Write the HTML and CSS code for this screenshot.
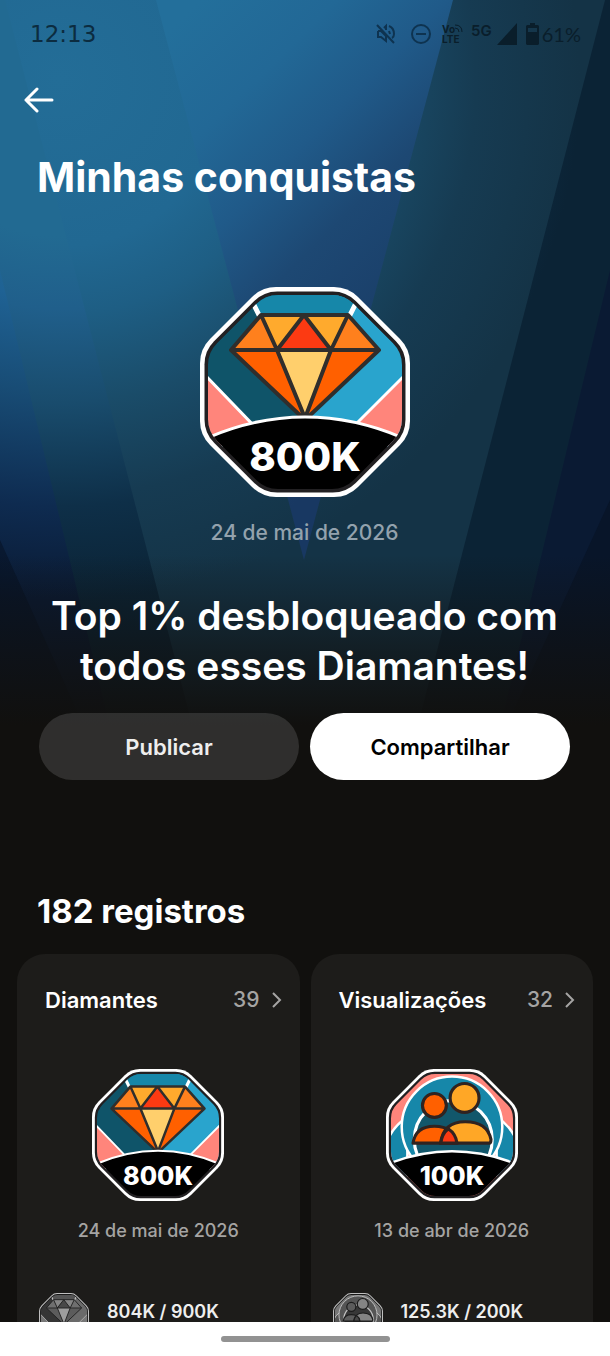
FILE: index.html
```html
<!DOCTYPE html>
<html lang="pt-BR">
<head>
  <meta charset="UTF-8">
  <meta name="viewport" content="width=device-width, initial-scale=1.0">
  <title>Minhas conquistas</title>
  <link rel="stylesheet" href="styles.css">
</head>
<body>
  <!-- Shared badge artwork -->
  <svg class="defs" width="0" height="0" aria-hidden="true">
    <defs>
      <path id="octagon" d="M-29 -105H29Q43 -105 53 -95L95 -53Q105 -43 105 -29V29Q105 43 95 53L53 95Q43 105 29 105H-29Q-43 105 -53 95L-95 53Q-105 43 -105 29V-29Q-105 -43 -95 -53L-53 -95Q-43 -105 -29 -105Z"/>
      <clipPath id="octagon-clip">
        <use href="#octagon" transform="translate(105 105) scale(.924)"/>
      </clipPath>

      <symbol id="badge-diamond" viewBox="0 0 210 210">
        <use href="#octagon" transform="translate(105 105)" fill="#fff"/>
        <use href="#octagon" transform="translate(105 105) scale(.957)" fill="#222022"/>
        <g clip-path="url(#octagon-clip)">
          <path fill="#0f5469" d="M0 0H105V160H0Z"/>
          <path fill="#29a4cd" d="M105 0H210V160H105Z"/>
          <path fill="#1687a9" d="M46 0H162L148 32H60Z"/>
          <path fill="none" stroke="#fff" stroke-width="5" d="M52 14L60 30M157 14L149 30"/>
          <path fill="#ff857b" stroke="#fff" stroke-width="3" d="M4 87L56 141L0 170ZM206 87L152 141L210 170Z"/>
          <path fill="#ff6000" d="M31 63H179L105 131Z"/>
          <path fill="#ffcf6c" d="M77 63H131L105 131Z"/>
          <path fill="#ff801d" d="M61 28L31 63H77ZM148 28L179 63H131Z"/>
          <path fill="#ffaa2d" d="M61 28H104L77 63ZM104 28H148L131 63Z"/>
          <path fill="#fc3a12" d="M104 28L77 63H131Z"/>
          <path fill="none" stroke="#302e2c" stroke-width="4" stroke-linejoin="round" d="M61 28H148L179 63L105 133L31 63ZM31 63H179M61 28L77 63L105 131L131 63L148 28M77 63L104 28L131 63"/>
          <path fill="#000" stroke="#fff" stroke-width="3" d="M-4 156Q50 130 105 130T214 156V230H-4Z"/>
        </g>
      </symbol>

      <symbol id="badge-people" viewBox="0 0 210 210">
        <use href="#octagon" transform="translate(105 105)" fill="#fff"/>
        <use href="#octagon" transform="translate(105 105) scale(.957)" fill="#222022"/>
        <g clip-path="url(#octagon-clip)">
          <path fill="#ff857b" d="M0 0H210V210H0Z"/>
          <path fill="#1687a9" stroke="#fff" stroke-width="4" d="M0 120Q8 94 34 76V170H0ZM210 120Q202 94 176 76V170H210Z"/>
          <circle cx="105" cy="92" r="80" fill="#1687a9" stroke="#fff" stroke-width="4"/>
          <circle cx="107" cy="112" r="62" fill="#12576b" stroke="#fff" stroke-width="5"/>
          <g stroke="#302320" stroke-width="5" stroke-linejoin="round">
            <circle cx="77" cy="58" r="19" fill="#ff6000"/>
            <circle cx="125" cy="46" r="23" fill="#ffa726"/>
            <path fill="#ff6000" d="M43 118Q47 91 77 91Q108 91 113 118Z"/>
            <path fill="#ffa726" d="M87 118Q91 84 126 84Q161 84 167 112Q167 118 164 118Z"/>
            <path fill="#fc3a12" d="M87 118Q89 103 99 95Q111 103 113 118Z"/>
          </g>
          <path fill="#000" stroke="#fff" stroke-width="4" d="M-4 154Q50 131 105 131T214 154V230H-4Z"/>
        </g>
      </symbol>
    </defs>
  </svg>

  <div class="screen">
    <!-- Light beams behind the hero -->
    <svg class="beams" viewBox="0 0 610 740" preserveAspectRatio="none" aria-hidden="true">
      <defs>
        <radialGradient id="base" gradientUnits="userSpaceOnUse" cx="60" cy="80" r="520">
          <stop offset=".3" stop-color="#22698f"/>
          <stop offset=".42" stop-color="#1f6294"/>
          <stop offset=".6" stop-color="#184c75"/>
          <stop offset=".82" stop-color="#0e2b50"/>
          <stop offset="1" stop-color="#0a1a33"/>
        </radialGradient>
        <radialGradient id="outer" gradientUnits="userSpaceOnUse" cx="60" cy="80" r="520">
          <stop offset=".3" stop-color="#226a92"/>
          <stop offset=".44" stop-color="#205f8b"/>
          <stop offset=".62" stop-color="#194c6d"/>
          <stop offset=".82" stop-color="#0e2f48"/>
          <stop offset="1" stop-color="#0b2335"/>
        </radialGradient>
        <radialGradient id="wide" gradientUnits="userSpaceOnUse" cx="60" cy="80" r="520">
          <stop offset="0" stop-color="#236d97"/>
          <stop offset=".32" stop-color="#216892"/>
          <stop offset=".45" stop-color="#1e5e84"/>
          <stop offset=".62" stop-color="#1a4c69"/>
          <stop offset=".8" stop-color="#163b52"/>
          <stop offset="1" stop-color="#143346"/>
        </radialGradient>
        <linearGradient id="center" gradientUnits="userSpaceOnUse" x1="0" y1="0" x2="400" y2="400">
          <stop offset=".25" stop-color="#236f9b"/>
          <stop offset=".42" stop-color="#226896"/>
          <stop offset=".56" stop-color="#205a89"/>
          <stop offset=".7" stop-color="#1d4873"/>
          <stop offset="1" stop-color="#183862"/>
        </linearGradient>
        <linearGradient id="fade" x1="0" y1="0" x2="0" y2="1">
          <stop offset=".75" stop-color="#11100e" stop-opacity="0"/>
          <stop offset=".88" stop-color="#11100e" stop-opacity=".6"/>
          <stop offset=".98" stop-color="#11100e"/>
        </linearGradient>
      </defs>
      <path fill="url(#base)" d="M0 0H610V740H0Z"/>
      <path fill="url(#outer)" d="M0 270L113 740H497L610 270V0H0Z"/>
      <path fill="url(#wide)" d="M5 0L196 740H414L605 0Z"/>
      <path fill="url(#center)" d="M156 0L304 560L453 0Z"/>
      <path fill="#06101f" fill-opacity=".5" d="M0 540L90 740H0ZM610 500L500 740H610Z"/>
      <path fill="url(#fade)" d="M0 0H610V740H0Z"/>
    </svg>

    <div class="status-bar">
      <span class="clock">12:13</span>
      <div class="status-icons">
        <svg class="mute" width="20" height="22" viewBox="0 0 20 22" fill="none" stroke="currentColor" stroke-width="2">
          <path d="M1 2L18 20M2 8H5L10 13V18L5 14H2V8M8 5L10 3V7M13 8L14 11M13 3Q18 5 18 11Q18 14 16 15"/>
        </svg>
        <svg class="dnd" width="22" height="22" viewBox="0 0 22 22" fill="none" stroke="currentColor" stroke-width="2">
          <circle cx="11" cy="11" r="9"/><path d="M6 11H16"/>
        </svg>
        <div class="volte">
          <span>Vo<svg width="8" height="8" viewBox="0 0 8 8" fill="none" stroke="currentColor"><path d="M0 4Q4 4 4 8M0 1Q7 1 7 8"/></svg></span>
          <span>LTE</span>
        </div>
        <span class="network">5G</span>
        <svg class="signal" width="20" height="22" viewBox="0 0 20 22"><path fill="currentColor" d="M20 0V22H0Z"/></svg>
        <svg class="battery" width="13" height="22" viewBox="0 0 13 22"><path fill="currentColor" fill-rule="evenodd" d="M4 0H9V2H12L13 3V21L12 22H1L0 21V3L1 2H4ZM2 5V9H11V5Z"/></svg>
        <span class="percent">61%</span>
      </div>
    </div>

    <header class="header">
      <button class="back" type="button" aria-label="Voltar">
        <svg width="30" height="26" viewBox="0 0 30 26" fill="none" stroke="currentColor" stroke-width="3" stroke-linecap="round" stroke-linejoin="round"><path d="M13 2L2 13L13 24M2 13H28"/></svg>
      </button>
      <h1>Minhas conquistas</h1>
    </header>

    <section class="hero">
      <svg class="badge-large" viewBox="0 0 210 210">
        <use href="#badge-diamond"/>
        <text class="badge-label" x="105" y="184">800K</text>
      </svg>
      <p class="hero-date">24 de mai de 2026</p>
      <h2>Top 1% desbloqueado com todos esses Diamantes!</h2>
      <div class="actions">
        <button class="btn btn-dark" type="button">Publicar</button>
        <button class="btn btn-light" type="button">Compartilhar</button>
      </div>
    </section>

    <section class="records">
      <h3>182 registros</h3>
      <div class="cards">
        <article class="card">
          <a class="card-head" href="#">
            <span>Diamantes</span>
            <span class="count">39
              <svg width="10" height="16" viewBox="0 0 10 16" fill="none" stroke="currentColor" stroke-width="2"><path d="M1 1L8 8L1 15"/></svg>
            </span>
          </a>
          <svg class="badge" viewBox="0 0 210 210">
            <use href="#badge-diamond"/>
            <text class="badge-label" x="105" y="184">800K</text>
          </svg>
          <p class="card-date">24 de mai de 2026</p>
          <div class="progress">
            <svg class="badge-small" viewBox="0 0 210 210"><use href="#badge-diamond"/></svg>
            <span>804K / 900K</span>
          </div>
        </article>

        <article class="card">
          <a class="card-head" href="#">
            <span>Visualizações</span>
            <span class="count">32
              <svg width="10" height="16" viewBox="0 0 10 16" fill="none" stroke="currentColor" stroke-width="2"><path d="M1 1L8 8L1 15"/></svg>
            </span>
          </a>
          <svg class="badge" viewBox="0 0 210 210">
            <use href="#badge-people"/>
            <text class="badge-label" x="105" y="184">100K</text>
          </svg>
          <p class="card-date">13 de abr de 2026</p>
          <div class="progress">
            <svg class="badge-small" viewBox="0 0 210 210"><use href="#badge-people"/></svg>
            <span>125.3K / 200K</span>
          </div>
        </article>
      </div>
    </section>

    <div class="nav-bar"><span class="nav-handle"></span></div>
  </div>
</body>
</html>
```

FILE: styles.css
```css
* {
  box-sizing: border-box;
}

body {
  margin: 0;
  background-color: #11100e;
  color: #fff;
  font-family: Inter, "Liberation Sans", sans-serif;
}

h1, h2, h3, p {
  margin: 0;
}

button {
  font-family: inherit;
  border: none;
  cursor: pointer;
}

svg {
  display: block;
  flex-shrink: 0;
}

.defs {
  position: absolute;
}

.screen {
  position: relative;
  display: flex;
  flex-direction: column;
  height: 100vh;
  overflow: hidden;
}

.beams {
  position: absolute;
  top: 0;
  left: 0;
  z-index: -1;
  width: 100%;
  height: 740px;
}

/* Status bar */
.status-bar {
  display: flex;
  flex-shrink: 0;
  justify-content: space-between;
  align-items: center;
  height: 68px;
  padding: 0 29px 0 30px;
  color: #0c2c40;
}

.clock {
  font-family: "DejaVu Sans", sans-serif;
  font-size: 23px;
}

.status-icons {
  display: flex;
  align-items: center;
  color: #0a1e2b;
}

.mute {
  margin-right: 14px;
  color: #0e3350;
}

.dnd {
  margin-right: 10px;
  color: #0e3350;
}

.volte {
  display: flex;
  flex-direction: column;
  margin-right: 8px;
  font-size: 10px;
  line-height: 10px;
  font-weight: 700;
}

.volte span, .volte svg {
  display: flex;
}

.network {
  align-self: flex-start;
  margin-right: 5px;
  font-size: 15px;
  line-height: 18px;
  font-weight: 600;
}

.signal {
  margin-right: 9px;
}

.battery {
  margin-right: 3px;
}

.percent {
  font-family: Lato, sans-serif;
  font-size: 20px;
  font-weight: 400;
}

/* Header */
.header {
  flex-shrink: 0;
  padding: 0 24px;
}

.back {
  display: flex;
  align-items: center;
  height: 64px;
  padding: 0;
  background: none;
  color: #fff;
}

h1 {
  padding-left: 13px;
  margin-top: 20px;
  font-size: 41px;
  line-height: 50px;
  font-weight: 700;
}

/* Hero */
.hero {
  display: flex;
  flex-direction: column;
  flex-shrink: 0;
  align-items: center;
  padding: 85px 40px 0 39px;
}

.badge-large {
  width: 210px;
  height: 210px;
}

.badge-label {
  fill: #fff;
  font-size: 40px;
  font-weight: 800;
  text-anchor: middle;
}

.hero-date {
  margin-top: 22px;
  color: #93a2ad;
  font-size: 21px;
  line-height: 28px;
  font-weight: 500;
}

h2 {
  margin-top: 44px;
  font-size: 39px;
  line-height: 50px;
  font-weight: 600;
  text-align: center;
}

.actions {
  display: flex;
  gap: 11px;
  width: 100%;
  margin-top: 22px;
}

.btn {
  flex: 1;
  height: 67px;
  border-radius: 34px;
  font-size: 22px;
  font-weight: 600;
}

.btn-dark {
  background-color: rgba(255, 255, 255, 0.13);
  color: #eee;
}

.btn-light {
  background-color: #fff;
  color: #000;
}

/* Records */
.records {
  flex: 1;
  min-height: 0;
  overflow: hidden;
  padding: 110px 17px 0;
}

h3 {
  padding-left: 20px;
  font-size: 33px;
  line-height: 42px;
  font-weight: 700;
}

.cards {
  display: grid;
  grid-template-columns: 1fr 1fr;
  gap: 11px;
  margin-top: 22px;
}

.card {
  display: flex;
  flex-direction: column;
  align-items: center;
  padding: 30px 18px;
  border-radius: 28px;
  background-color: #1d1c1a;
}

.card-head {
  display: flex;
  justify-content: space-between;
  width: 100%;
  padding-left: 10px;
  color: #fff;
  font-size: 22px;
  line-height: 32px;
  font-weight: 600;
  text-decoration: none;
}

.count {
  display: flex;
  align-items: center;
  gap: 12px;
  color: #a5a4a3;
  font-size: 21px;
  font-weight: 500;
}

.badge {
  width: 132px;
  height: 132px;
  margin-top: 53px;
}

.card-date {
  margin-top: 18px;
  color: #a5a4a3;
  font-size: 18px;
  line-height: 24px;
  font-weight: 500;
}

.progress {
  display: flex;
  align-items: center;
  gap: 18px;
  width: 100%;
  margin-top: 50px;
  padding-left: 4px;
  color: #eee;
  font-size: 18px;
  line-height: 24px;
  font-weight: 600;
}

.progress span {
  align-self: flex-start;
  margin-top: 7px;
}

.badge-small {
  width: 50px;
  height: 50px;
  filter: grayscale(1) brightness(0.75);
}

/* System navigation */
.nav-bar {
  display: flex;
  flex-shrink: 0;
  justify-content: center;
  align-items: center;
  height: 34px;
  background-color: #fff;
}

.nav-handle {
  width: 169px;
  height: 6px;
  border-radius: 3px;
  background-color: #929292;
}
```
